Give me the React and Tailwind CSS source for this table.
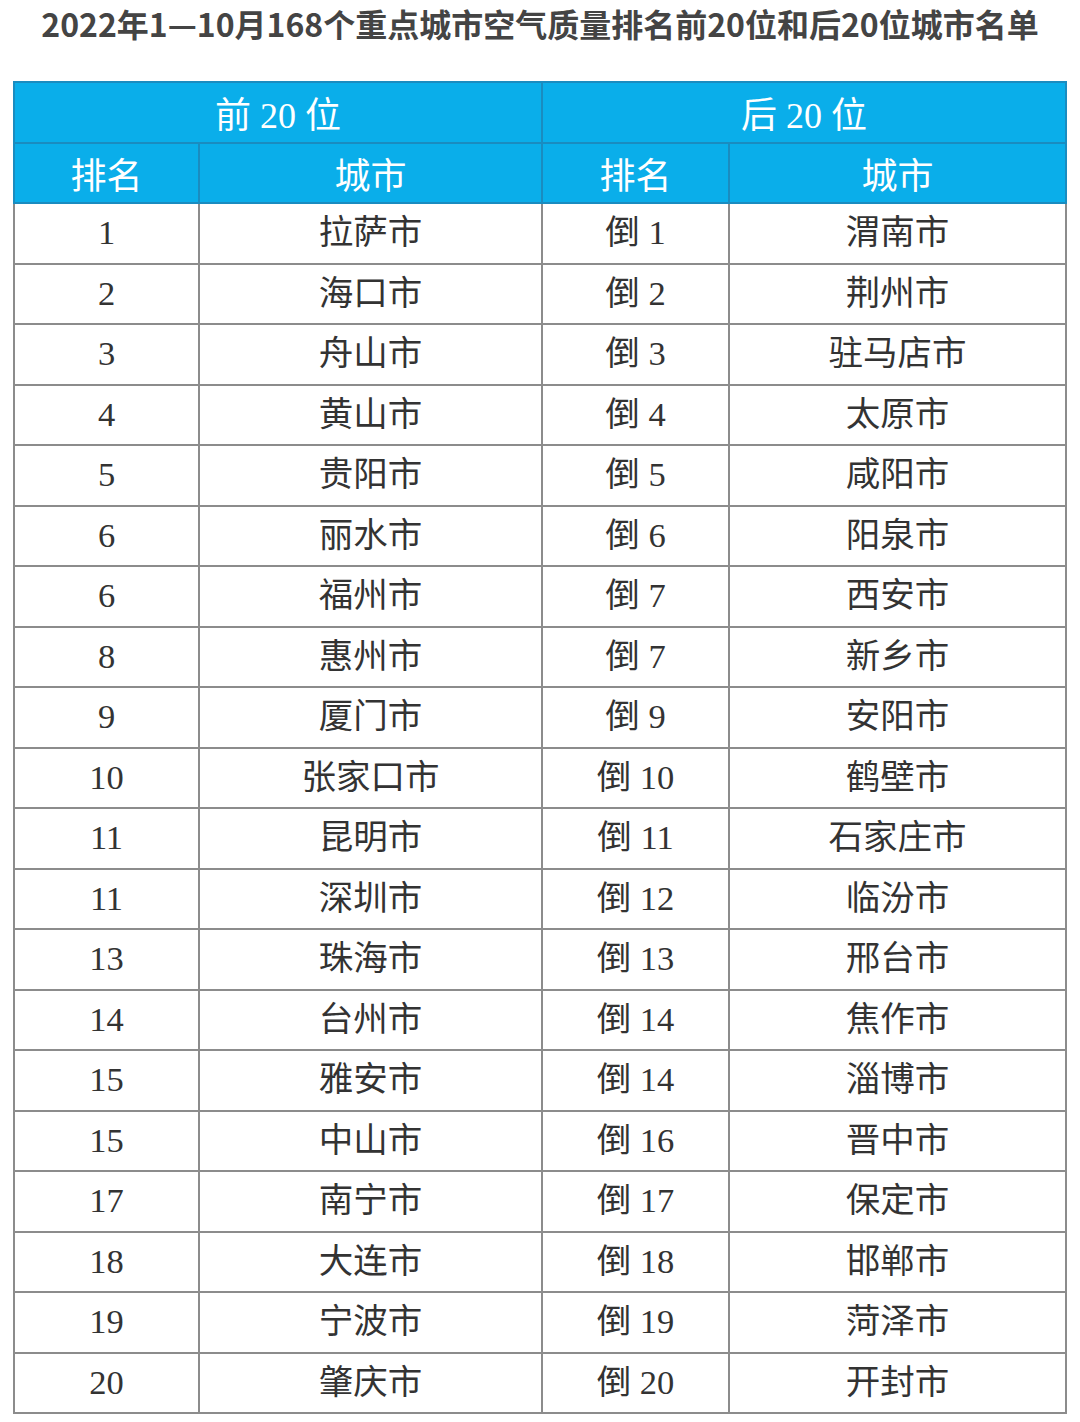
const top = [
  ["1", "拉萨市"], ["2", "海口市"], ["3", "舟山市"], ["4", "黄山市"], ["5", "贵阳市"],
  ["6", "丽水市"], ["6", "福州市"], ["8", "惠州市"], ["9", "厦门市"], ["10", "张家口市"],
  ["11", "昆明市"], ["11", "深圳市"], ["13", "珠海市"], ["14", "台州市"], ["15", "雅安市"],
  ["15", "中山市"], ["17", "南宁市"], ["18", "大连市"], ["19", "宁波市"], ["20", "肇庆市"],
]

const bottom = [
  ["倒 1", "渭南市"], ["倒 2", "荆州市"], ["倒 3", "驻马店市"], ["倒 4", "太原市"], ["倒 5", "咸阳市"],
  ["倒 6", "阳泉市"], ["倒 7", "西安市"], ["倒 7", "新乡市"], ["倒 9", "安阳市"], ["倒 10", "鹤壁市"],
  ["倒 11", "石家庄市"], ["倒 12", "临汾市"], ["倒 13", "邢台市"], ["倒 14", "焦作市"], ["倒 14", "淄博市"],
  ["倒 16", "晋中市"], ["倒 17", "保定市"], ["倒 18", "邯郸市"], ["倒 19", "菏泽市"], ["倒 20", "开封市"],
]

const font = { fontFamily: '"Liberation Serif", "Noto Sans CJK SC", serif' }

export default function App() {
  return (
    <div className="w-[1080px] h-[1422px] bg-white overflow-hidden">
      <div
        className="pt-[3px] text-center text-[32px] leading-[40px] font-bold text-[#444444] whitespace-nowrap"
        style={{ fontFamily: '"Noto Sans CJK SC", "Noto Sans", sans-serif' }}
      >
        2022年1—10月168个重点城市空气质量排名前20位和后20位城市名单
      </div>

      <div className="ml-[13px] mt-[38px] w-[1054px] text-[34.5px]" style={font}>
        {/* header */}
        <div className="bg-[#0aaeea] text-white text-[36px] border-l-2 border-t-2 border-[#1a8cc0]">
          <div className="flex h-[60.5px] border-b-2 border-[#1a8cc0]">
            <div className="w-[528px] pt-[8px] flex items-center justify-center border-r-2 border-[#1a8cc0]">前 20 位</div>
            <div className="flex-1 pt-[8px] flex items-center justify-center border-r-2 border-[#1a8cc0]">后 20 位</div>
          </div>
          <div className="flex h-[60.5px] border-b-2 border-[#1a8cc0]">
            <div className="w-[185px] pt-[8px] flex items-center justify-center border-r-2 border-[#1a8cc0]">排名</div>
            <div className="w-[343px] pt-[8px] flex items-center justify-center border-r-2 border-[#1a8cc0]">城市</div>
            <div className="w-[187px] pt-[8px] flex items-center justify-center border-r-2 border-[#1a8cc0]">排名</div>
            <div className="flex-1 pt-[8px] flex items-center justify-center border-r-2 border-[#1a8cc0]">城市</div>
          </div>
        </div>

        {/* rows */}
        <div className="border-l-2 border-[#8c8c8c] text-[#333333]">
          {top.map((t, i) => (
            <div key={i} className="flex h-[60.5px] border-b-2 border-[#8c8c8c]">
              <div className="w-[185px] flex items-center justify-center border-r-2 border-[#8c8c8c]">{t[0]}</div>
              <div className="w-[343px] flex items-center justify-center border-r-2 border-[#8c8c8c]">{t[1]}</div>
              <div className="w-[187px] flex items-center justify-center border-r-2 border-[#8c8c8c]">{bottom[i][0]}</div>
              <div className="flex-1 flex items-center justify-center border-r-2 border-[#8c8c8c]">{bottom[i][1]}</div>
            </div>
          ))}
        </div>
      </div>
    </div>
  )
}
